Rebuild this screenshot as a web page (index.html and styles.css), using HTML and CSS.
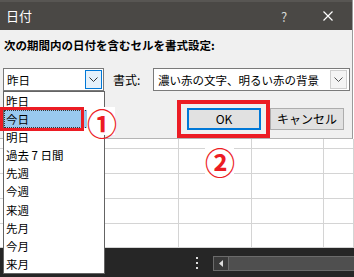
FILE: index.html
```html
<!DOCTYPE html>
<html lang="ja">
<head>
    <meta charset="UTF-8">
    <title>日付</title>
    <link rel="stylesheet" href="styles.css">
</head>
<body>
    <div class="screen">
        <div class="dialog">
            <div class="titlebar">
                <span class="title">日付</span>
                <span class="help">?</span>
                <svg class="close" width="10" height="10" viewBox="0 0 10 10">
                    <path d="M0.5 0.5 L9.5 9.5 M9.5 0.5 L0.5 9.5" stroke="#fff" stroke-width="1.2"/>
                </svg>
            </div>
            <div class="dialog-body">
                <div class="prompt">次の期間内の日付を含むセルを書式設定:</div>
                <div class="combo-row">
                    <div class="combo combo-period">
                        <span class="combo-text">昨日</span>
                        <span class="combo-btn active">
                            <svg width="9" height="5" viewBox="0 0 9 5"><polyline points="0.5,0.5 4.5,4.5 8.5,0.5" fill="none" stroke="#333"/></svg>
                        </span>
                    </div>
                    <span class="format-label">書式:</span>
                    <div class="combo combo-format">
                        <span class="combo-text">濃い赤の文字、明るい赤の背景</span>
                        <span class="combo-btn">
                            <svg width="9" height="5" viewBox="0 0 9 5"><polyline points="0.5,0.5 4.5,4.5 8.5,0.5" fill="none" stroke="#555"/></svg>
                        </span>
                    </div>
                </div>
                <div class="button-row">
                    <button class="btn btn-ok">OK</button>
                    <button class="btn">キャンセル</button>
                </div>
            </div>
        </div>

        <div class="sheet" id="sheet"></div>

        <div class="statusbar">
            <svg class="dots" width="10" height="12" viewBox="0 0 10 12">
                <rect x="4" y="0" width="2" height="2" fill="#ddd"/>
                <rect x="4" y="5" width="2" height="2" fill="#ddd"/>
                <rect x="4" y="10" width="2" height="2" fill="#ddd"/>
            </svg>
            <div class="hscroll">
                <span class="hscroll-btn">
                    <svg width="4" height="7" viewBox="0 0 4 7"><polygon points="4,0 4,7 0,3.5" fill="#ddd"/></svg>
                </span>
            </div>
        </div>

        <!-- dropdown opened from the period combo -->
        <ul class="dropdown">
            <li>昨日</li>
            <li class="selected">今日</li>
            <li>明日</li>
            <li>過去 7 日間</li>
            <li>先週</li>
            <li>今週</li>
            <li>来週</li>
            <li>先月</li>
            <li>今月</li>
            <li>来月</li>
        </ul>

        <!-- annotations -->
        <div class="mark mark-today"></div>
        <div class="mark mark-ok"></div>
        <div class="step step-1">①</div>
        <div class="step step-2">②</div>
    </div>

    <script>
        const sheet = document.getElementById('sheet');
        for (let i = 0; i < 20; i++) {
            const cell = document.createElement('div');
            cell.className = 'cell';
            sheet.appendChild(cell);
        }
    </script>
</body>
</html>
```

FILE: styles.css
```css
body {
    margin: 0;
    padding: 0;
    font-family: "Noto Sans CJK JP", "Noto Sans", sans-serif;
    font-size: 12px;
    color: #000;
    background: #fff;
}

.screen {
    position: relative;
    width: 354px;
    height: 277px;
    overflow: hidden;
    display: flex;
    flex-direction: column;
}

.dialog {
    width: 353px;
    background: #f0f0f0;
    border-right: 1px solid #9a9a9a;
    border-bottom: 1px solid #b4b4b4;
    box-sizing: border-box;
}

.titlebar {
    height: 30px;
    background: #4a4845;
    border-top: 2px solid #585653;
    box-sizing: border-box;
    display: flex;
    align-items: center;
    padding: 0 19px 0 6px;
    color: #fff;
}

.title {
    flex: 1;
    font-size: 13px;
    line-height: 16px;
}

.help {
    width: 16px;
    margin-right: 31px;
    text-align: center;
    font-size: 13px;
    color: #d8d8d8;
}

.dialog-body {
    padding: 7px 0 8px 0;
}

.prompt {
    padding-left: 4px;
    font-size: 11.5px;
    font-weight: bold;
    line-height: 16px;
}

.combo-row {
    display: flex;
    align-items: center;
    margin-top: 15px;
    padding-left: 3px;
}

.combo {
    height: 23px;
    box-sizing: border-box;
    border: 1px solid #7a7a7a;
    background: #fff;
    display: flex;
    align-items: center;
}

.combo-period {
    width: 101px;
}

.combo-format {
    width: 197px;
}

.combo-text {
    flex: 1;
    padding-left: 3px;
    font-size: 11.5px;
    line-height: 16px;
    white-space: nowrap;
    overflow: hidden;
}

.combo-format .combo-text {
    padding-left: 4px;
}

.combo-btn {
    width: 17px;
    height: 19px;
    margin-right: 1px;
    box-sizing: border-box;
    border: 1px solid #cfcfcf;
    background: #f4f4f4;
    display: flex;
    align-items: center;
    justify-content: center;
}

.combo-btn.active {
    border-color: #0078d7;
    background: #e5f1fb;
}

.combo-format .combo-btn {
    margin-right: 2px;
}

.format-label {
    width: 40px;
    margin-left: 9px;
    line-height: 16px;
}

.button-row {
    display: flex;
    justify-content: flex-end;
    gap: 9px;
    margin-top: 17px;
    padding-right: 8px;
}

.btn {
    width: 74px;
    height: 22px;
    box-sizing: border-box;
    border: 1px solid #adadad;
    background: #e1e1e1;
    font-family: "Noto Sans CJK JP", "Noto Sans", sans-serif;
    font-size: 12px;
    line-height: 16px;
    padding: 0;
    color: #000;
}

.btn-ok {
    border: 2px solid #0078d7;
}

.sheet {
    display: grid;
    grid-template-columns: 179px 73px 72px 1fr;
    grid-template-rows: 10px 25px 25px 25px 24px;
}

.cell {
    border-right: 1px solid #d4d4d4;
    border-bottom: 1px solid #d4d4d4;
}

.statusbar {
    flex: 1;
    background: #262626;
    display: flex;
    align-items: flex-start;
    padding: 10px 0 0 192px;
}

.dots {
    margin-top: -1px;
}

.hscroll {
    flex: 1;
    height: 15px;
    margin-left: 11px;
    margin-top: -2px;
    box-sizing: border-box;
    border: 1px solid #6b6b6b;
    border-right: none;
    background: #4f4f4f;
    display: flex;
}

.hscroll-btn {
    width: 14px;
    background: #3a3a3a;
    border-right: 1px solid #6b6b6b;
    display: flex;
    align-items: center;
    justify-content: center;
}

.dropdown {
    position: absolute;
    left: 3px;
    top: 91px;
    width: 102px;
    height: 183px;
    box-sizing: border-box;
    margin: 0;
    padding: 0;
    list-style: none;
    background: #fff;
    border: 1px solid #646464;
}

.dropdown li {
    height: 18.1px;
    line-height: 18px;
    padding-left: 2px;
    font-size: 11.5px;
    white-space: nowrap;
}

.dropdown li.selected {
    background: #99c9ef;
    outline: 1px dotted #333;
    outline-offset: -1px;
}

.mark {
    position: absolute;
    box-sizing: border-box;
    border: 3px solid #ec1c24;
}

.mark-today {
    left: 0;
    top: 107px;
    width: 84px;
    height: 24px;
}

.mark-ok {
    left: 177px;
    top: 100px;
    width: 93px;
    height: 38px;
    border-width: 4px;
}

.step {
    position: absolute;
    width: 28px;
    height: 28px;
    background: #fff;
    color: #ec1c24;
    font-weight: bold;
    font-size: 30px;
    line-height: 30px;
    text-align: center;
}

.step-1 {
    left: 87px;
    top: 107px;
}

.step-2 {
    left: 205px;
    top: 146px;
    width: 29px;
    height: 29px;
}
```
